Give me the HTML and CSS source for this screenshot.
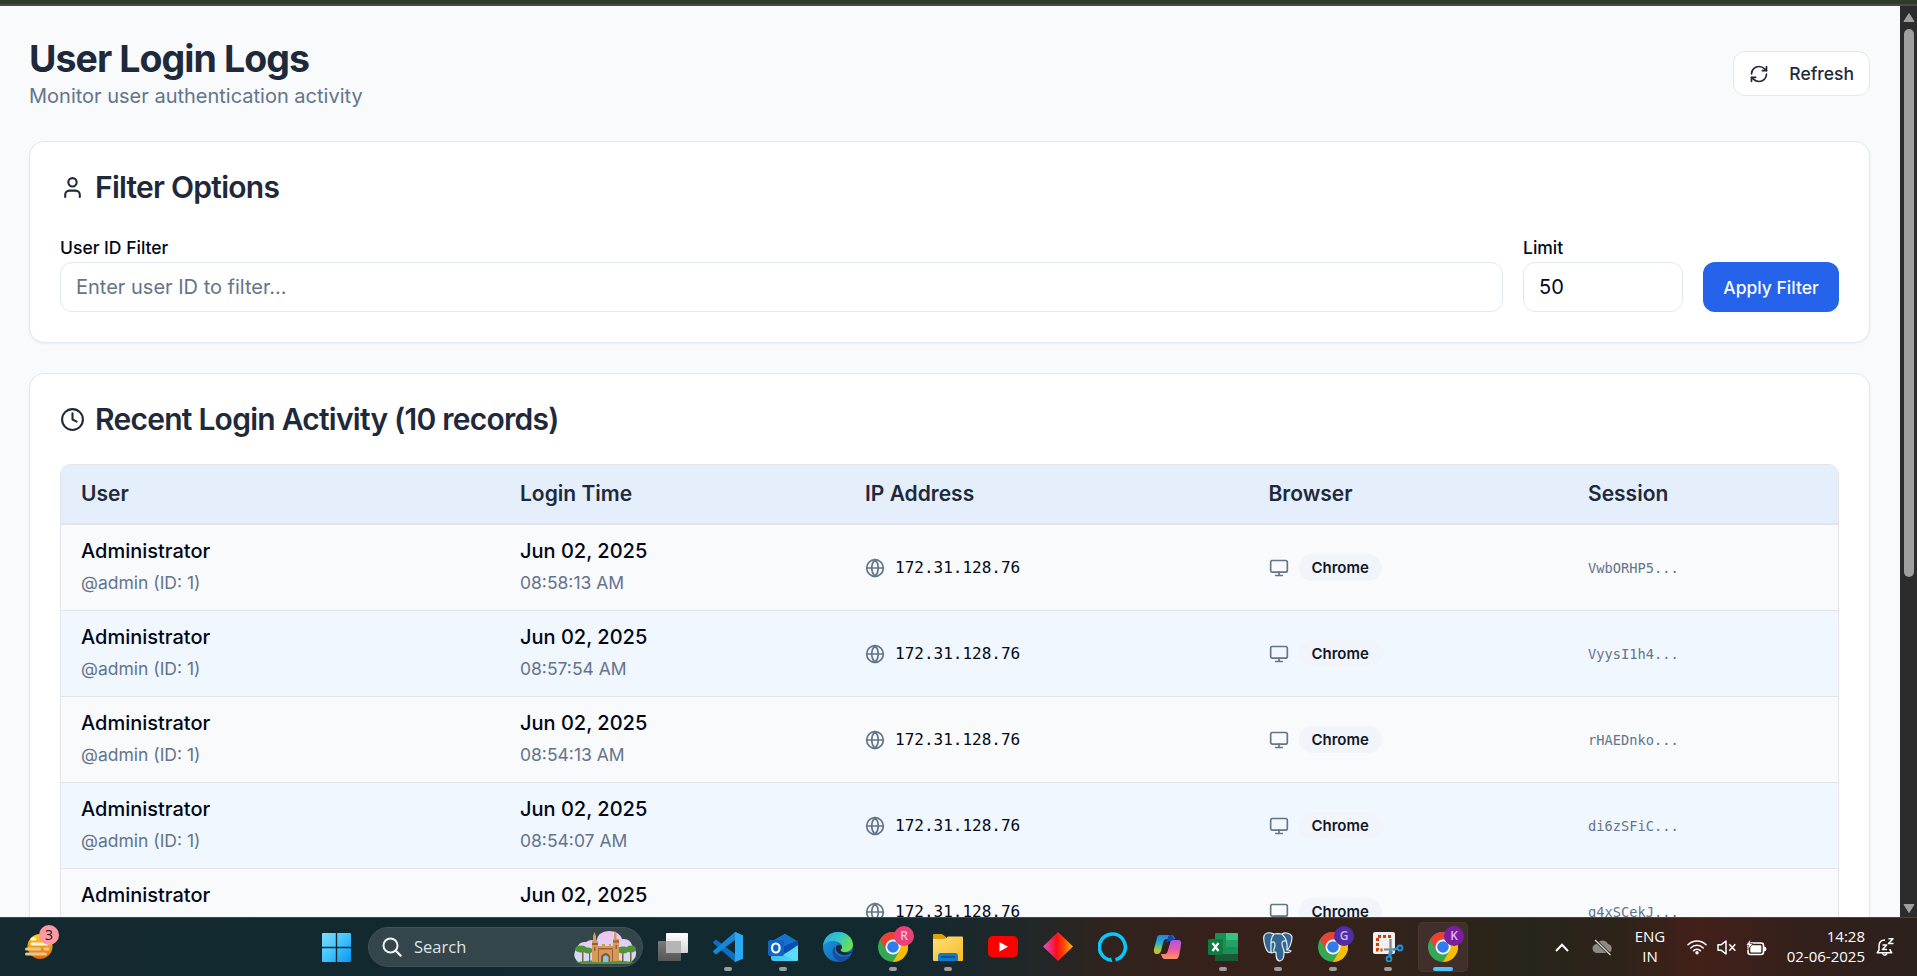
FILE: index.html
```html
<!DOCTYPE html>
<html lang="en">
<head>
<meta charset="utf-8">
<title>User Login Logs</title>
<link rel="stylesheet" href="styles.css">
</head>
<body>
<svg class="defs" width="0" height="0">
  <defs>
    <linearGradient id="winGrad" x1="0" y1="0" x2="1" y2="1"><stop offset="0" stop-color="#7fdcff"/><stop offset=".5" stop-color="#40c4fb"/><stop offset="1" stop-color="#0a94f5"/></linearGradient>
    <linearGradient id="sunGrad" x1="0" y1="0" x2="0" y2="1"><stop offset="0" stop-color="#ffd21f"/><stop offset="1" stop-color="#e8640c"/></linearGradient>
    <linearGradient id="cloudGrad" x1="0" y1="0" x2="0" y2="1"><stop offset="0" stop-color="#f3c3ee"/><stop offset="1" stop-color="#c9e0fa"/></linearGradient>
    <linearGradient id="whiteGrad" x1="0" y1="0" x2="0" y2="1"><stop offset="0" stop-color="#fff"/><stop offset="1" stop-color="#d5d5d5"/></linearGradient>
    <linearGradient id="greyGrad" x1="0" y1="0" x2="0" y2="1"><stop offset="0" stop-color="#7b7b7b"/><stop offset="1" stop-color="#565656"/></linearGradient>
    <linearGradient id="edgeTop" x1="0" y1="0" x2="1" y2=".5"><stop offset="0" stop-color="#2c9fe0"/><stop offset=".5" stop-color="#31c5cf"/><stop offset="1" stop-color="#6be04d"/></linearGradient>
    <linearGradient id="edgeLow" x1="0" y1="0" x2="1" y2="1"><stop offset="0" stop-color="#1b9de2"/><stop offset="1" stop-color="#1259b4"/></linearGradient>
    <linearGradient id="folderGrad" x1="0" y1="0" x2="1" y2="1"><stop offset="0" stop-color="#ffe17a"/><stop offset="1" stop-color="#f8b926"/></linearGradient>
    <linearGradient id="diamondGrad" x1="0" y1="0" x2="1" y2="0"><stop offset="0" stop-color="#e052d6"/><stop offset=".45" stop-color="#fb0d1b"/><stop offset=".65" stop-color="#fb3a08"/><stop offset="1" stop-color="#f8b80d"/></linearGradient>
    <linearGradient id="copLeft" x1="0" y1="0" x2="0" y2="1"><stop offset="0" stop-color="#1c85e8"/><stop offset=".45" stop-color="#2bb5c9"/><stop offset=".75" stop-color="#9ccb3f"/><stop offset="1" stop-color="#e9b620"/></linearGradient>
    <linearGradient id="copRight" x1="0" y1="0" x2="0" y2="1"><stop offset="0" stop-color="#a75be8"/><stop offset=".5" stop-color="#e85aa6"/><stop offset="1" stop-color="#ff9560"/></linearGradient>
    <linearGradient id="mailGrad" x1="0" y1="0" x2="1" y2="1"><stop offset="0" stop-color="#2fa6ee"/><stop offset="1" stop-color="#50dcfb"/></linearGradient>
  </defs>
  <symbol id="user" viewBox="0 0 24 24"><circle cx="12" cy="7" r="4"/><path d="M19 21v-2a4 4 0 0 0-4-4H9a4 4 0 0 0-4 4v2"/></symbol>
  <symbol id="clock" viewBox="0 0 24 24"><circle cx="12" cy="12" r="10"/><path d="M12 6v6l4 2"/></symbol>
  <symbol id="globe" viewBox="0 0 24 24"><circle cx="12" cy="12" r="10"/><path d="M12 2a14.5 14.5 0 0 0 0 20 14.5 14.5 0 0 0 0-20M2 12h20"/></symbol>
  <symbol id="monitor" viewBox="0 0 24 24"><rect width="20" height="14" x="2" y="3" rx="2"/><path d="M8 21h8M12 17v4"/></symbol>
  <symbol id="refresh" viewBox="0 0 24 24"><path d="M3 12a9 9 0 0 1 9-9 9.75 9.75 0 0 1 6.74 2.74L21 8"/><path d="M21 3v5h-5M21 12a9 9 0 0 1-9 9 9.75 9.75 0 0 1-6.74-2.74L3 16"/><path d="M8 16H3v5"/></symbol>
  <symbol id="chrome" viewBox="0 0 30 30">
    <circle cx="15" cy="15" r="15" fill="#34a853"/>
    <path d="M2 7.5A15 15 0 0 1 28 7.5H15L8.5 18.7Z" fill="#ea4335"/>
    <path d="M28 7.5A15 15 0 0 1 15 30L21.5 18.7 15 7.5Z" fill="#fbbc04"/>
    <circle cx="15" cy="15" r="7.5" fill="#fff"/><circle cx="15" cy="15" r="5.8" fill="#2f7df0"/>
  </symbol>
</svg>

<div class="window-edge"></div>
<div class="viewport">
  <main class="page">
    <header class="page-header">
      <div>
        <h1 class="title">User Login Logs</h1>
        <p class="subtitle">Monitor user authentication activity</p>
      </div>
      <button class="btn-refresh"><svg class="icon"><use href="#refresh"/></svg><span>Refresh</span></button>
    </header>

    <section class="card">
      <h2 class="card-title"><svg class="icon-lg"><use href="#user"/></svg>Filter Options</h2>
      <div class="filters">
        <div class="field field-wide"><label class="label" for="uid">User ID Filter</label><input class="input" id="uid" placeholder="Enter user ID to filter..."></div>
        <div class="field field-limit"><label class="label" for="limit">Limit</label><input class="input" id="limit" value="50"></div>
        <button class="btn-apply">Apply Filter</button>
      </div>
    </section>

    <section class="card">
      <h2 class="card-title"><svg class="icon-lg"><use href="#clock"/></svg>Recent Login Activity (10 records)</h2>
      <div class="table-frame">
        <div class="row row-head"><div>User</div><div>Login Time</div><div>IP Address</div><div>Browser</div><div>Session</div></div>
        <div class="row">
          <div class="stack"><p class="main">Administrator</p><p class="sub">@admin (ID: 1)</p></div>
          <div class="stack"><p class="main">Jun 02, 2025</p><p class="sub">08:58:13 AM</p></div>
          <div class="inline"><svg class="icon muted"><use href="#globe"/></svg><span class="ip">172.31.128.76</span></div>
          <div class="inline"><svg class="icon muted"><use href="#monitor"/></svg><span class="badge">Chrome</span></div>
          <div class="session">VwbORHP5...</div>
        </div>
        <div class="row row-alt">
          <div class="stack"><p class="main">Administrator</p><p class="sub">@admin (ID: 1)</p></div>
          <div class="stack"><p class="main">Jun 02, 2025</p><p class="sub">08:57:54 AM</p></div>
          <div class="inline"><svg class="icon muted"><use href="#globe"/></svg><span class="ip">172.31.128.76</span></div>
          <div class="inline"><svg class="icon muted"><use href="#monitor"/></svg><span class="badge">Chrome</span></div>
          <div class="session">VyysI1h4...</div>
        </div>
        <div class="row">
          <div class="stack"><p class="main">Administrator</p><p class="sub">@admin (ID: 1)</p></div>
          <div class="stack"><p class="main">Jun 02, 2025</p><p class="sub">08:54:13 AM</p></div>
          <div class="inline"><svg class="icon muted"><use href="#globe"/></svg><span class="ip">172.31.128.76</span></div>
          <div class="inline"><svg class="icon muted"><use href="#monitor"/></svg><span class="badge">Chrome</span></div>
          <div class="session">rHAEDnko...</div>
        </div>
        <div class="row row-alt">
          <div class="stack"><p class="main">Administrator</p><p class="sub">@admin (ID: 1)</p></div>
          <div class="stack"><p class="main">Jun 02, 2025</p><p class="sub">08:54:07 AM</p></div>
          <div class="inline"><svg class="icon muted"><use href="#globe"/></svg><span class="ip">172.31.128.76</span></div>
          <div class="inline"><svg class="icon muted"><use href="#monitor"/></svg><span class="badge">Chrome</span></div>
          <div class="session">di6zSFiC...</div>
        </div>
        <div class="row">
          <div class="top"><p class="main">Administrator</p></div>
          <div class="top"><p class="main">Jun 02, 2025</p></div>
          <div class="inline"><svg class="icon muted"><use href="#globe"/></svg><span class="ip">172.31.128.76</span></div>
          <div class="inline"><svg class="icon muted"><use href="#monitor"/></svg><span class="badge">Chrome</span></div>
          <div class="session">q4xSCekJ...</div>
        </div>
      </div>
    </section>
  </main>
  <div class="scrollbar">
    <svg class="arrow" viewBox="0 0 12 10"><path d="M6 1 11 9H1Z"/></svg>
    <div class="track"><div class="thumb"></div></div>
    <svg class="arrow" viewBox="0 0 12 10"><path d="M6 9 11 1H1Z"/></svg>
  </div>
</div>

<footer class="taskbar">
  <div class="weather">
    <svg width="36" height="36" viewBox="0 0 36 36">
      <circle cx="16" cy="23.500" r="12.500" fill="url(#sunGrad)"/>
      <g fill="none" stroke-linecap="round" stroke-width="3"><path d="M8 16h3M8 21h15" stroke="#fff6dc"/><path d="M2.500 26h13M21 26h3M2.500 31h19" stroke="#e6c68c"/></g>
    </svg>
    <span class="count">3</span>
  </div>

  <div class="start"><svg width="29" height="29" viewBox="0 0 29 29"><path fill="url(#winGrad)" d="M1 0H13.800V13.800H0V1Q0 0 1 0ZM15.200 0H28q1 0 1 1V13.800H15.200ZM0 15.200H13.800V29H1q-1 0-1-1ZM15.200 15.200H29V28q0 1-1 1H15.200Z"/></svg></div>

  <div class="search">
    <svg class="lens" width="20" height="20" viewBox="0 0 20 20"><circle cx="8.500" cy="8.500" r="7" fill="none" stroke="#f0f2f2" stroke-width="2"/><path d="m13.600 13.600 5 5" stroke="#f0f2f2" stroke-width="2.200" stroke-linecap="round"/></svg>
    <span>Search</span>
    <svg class="castle" width="64" height="33" viewBox="0 0 64 33">
      <path d="M5 31Q-2 24 4 17q2-7 9-6 6-4 10 0Q25 0 36 0q10 0 13 8 8-1 10 6 7 8 2 14l-4 4H9Z" fill="url(#cloudGrad)"/>
      <path d="M3 31q28-4 58 0l-5 2H9Z" fill="#4f9838"/>
      <g fill="#8b5a32"><path d="M9 19h1.500v12H9zM16 20h1.200v11H16zM49 20h1.500v11H49zM57 19h1.500v12H57z"/></g>
      <g fill="#4e9439"><ellipse cx="8" cy="18" rx="6" ry="3.500"/><ellipse cx="15" cy="19.500" rx="5" ry="3"/><ellipse cx="50" cy="19" rx="6" ry="3.500"/><ellipse cx="58" cy="18" rx="5" ry="3.500"/></g>
      <path d="M19 31V10h1V5l1.500-4L23 5v5h2v5h4v-2h3v2h4v-2h2v2h2V8h1V3l1-3 1.500 3v5H46V30Z" fill="#d59a5a"/>
      <path d="M19 12h6v2h-6zM40 9.500h6v2h-6zM25 17h15v1.500H25zM39 19h1v11h-1zM25 19h1v11h-1zM21 16h1.500v4H21zM42.500 14H44v4h-1.500z" fill="#9a6234"/>
      <path d="M28 31v-6q5-6 9 0v6Z" fill="#8b552d"/><path d="M30 31v-5q2.500-3.500 5.500 0v5Z" fill="#81c7ee"/>
    </svg>
  </div>

  <div class="apps">
    <div class="app"><svg viewBox="0 0 30 30"><rect y="9" width="23" height="20" rx="1" fill="url(#greyGrad)"/><rect x="8" y="1" width="22" height="20" rx="1" fill="url(#whiteGrad)"/><path d="M8 9h15v12H8z" fill="#b5b5b5"/></svg></div>
    <div class="app running"><svg viewBox="0 0 30 30"><path d="M22 0 30 3.500v23L22 30Z" fill="#2bacf7"/><path d="m0 10 3-2.500L22 22v8L0 11Z" fill="#0d6fc0"/><path d="m0 20 3 2.500L22 8V0L0 19Z" fill="#1589d8"/><path d="m22 0 8 3.500v23L22 30Z" fill="#2ba8f3"/></svg></div>
    <div class="app running"><svg viewBox="0 0 30 30"><path d="M3 10 17 2 30 10v18q0 1-2 1H6q-3 0-3-3Z" fill="url(#mailGrad)"/><path d="M3 10 17 2 29 9 16 17Z" fill="#1573cd"/><path d="M10 17 30 8v6L16 22Z" fill="#0b4db0"/><path d="M16 23 30 13v15l-2 1Z" fill="#5adcfa"/><rect y="8" width="16" height="16" rx="2" fill="#0f64c4"/><ellipse cx="7.800" cy="16" rx="3.800" ry="4.500" fill="none" stroke="#fff" stroke-width="2.200"/></svg></div>
    <div class="app"><svg viewBox="0 0 30 30"><circle cx="15" cy="15" r="15" fill="url(#edgeLow)"/><path d="M0 14C1 5 7 0 15 0c9 0 15 6 15 13 0 6-9 9-12 6-1-1 1-2 1-4 0-4-5-6-9-6C5 9 2 11 0 14Z" fill="url(#edgeTop)"/><path d="M12 14c-5 5-2 13 5 16 5 0 9-3 11-7-4 3-16 3-16-5Z" fill="#164fa1"/><path d="M18 19c-2-1 1-2 1-4 0-3-5-3-6 0-1 4 3 8 8 8 4 0 7-2 9-4-4 2-9 2-12 0Z" fill="#162a30"/></svg></div>
    <div class="app running"><svg><use href="#chrome"/></svg><span class="profile profile-r">R</span></div>
    <div class="app running"><svg viewBox="0 0 30 30"><path d="M0 3q0-1 1-1h8l4 3v4H0Z" fill="#e0a009"/><path d="M0 7h12l3-2.500h14q1 0 1 1V28q0 1-1 1H1q-1 0-1-1Z" fill="url(#folderGrad)"/><path d="M5 29v-5q0-3 3-3h14q3 0 3 3v5Z" fill="#1377cb"/><path d="M8 25h14" stroke="#0b4c8d" stroke-width="1.500"/></svg></div>
    <div class="app"><svg viewBox="0 0 30 30"><rect y="4" width="30" height="21.500" rx="5" fill="#f00"/><path d="m11.500 10 8.500 4.700-8.500 4.700Z" fill="#fff"/></svg></div>
    <div class="app"><svg viewBox="0 0 30 30"><path d="M15 0 30 14.500 15 29 0 14.500Z" fill="url(#diamondGrad)"/></svg></div>
    <div class="app"><svg viewBox="0 0 30 30"><path d="M13 28A13 13 0 1 1 17.500 27.700" fill="none" stroke="#05c8fb" stroke-width="3.600"/><path d="M12.500 24.500V30l2 0Z" fill="#05c8fb"/></svg></div>
    <div class="app"><svg viewBox="0 0 30 30"><path d="M6 3h12q3 0 4 4H13q-2 0-3 4L8 19q-1 3-4 3-4 0-3-5L4 6q0-2 2-3Z" fill="url(#copLeft)"/><path d="M17 3q3 0 4 4l1 2h-6l-3 2 2-6q0-2 2-2Z" fill="#1746b5"/><path d="M24 27H12q-3 0-4-5h4q2 0 3-4l2-8q1-2 4-2h4q4 0 3 5l-2 11q-1 2-2 3Z" fill="url(#copRight)"/><path d="m14.500 11 3-1-4 11-2.500 1Z" fill="#35201b"/></svg></div>
    <div class="app running"><svg viewBox="0 0 30 30"><path d="M8 1h21q1 0 1 1v26q0 1-1 1H9q-2 0-2-2V2q0-1 1-1Z" fill="#1a8f57"/><path d="M18 1h11l1 1v6H18Z" fill="#33c481"/><path d="M18 8h12v7H18Z" fill="#22a366"/><path d="M7 22h23v6l-1 1H8l-1-1Z" fill="#185c37"/><rect y="7" width="15" height="16" rx="1.500" fill="#107c41"/><path d="m4.500 11 6 8M10.500 11l-6 8" stroke="#fff" stroke-width="2.200"/></svg></div>
    <div class="app running"><svg viewBox="0 0 30 30"><g fill="#336791" stroke="#e6edf2" stroke-width="1.200" stroke-linejoin="round"><path d="M8 20C3 23 0 8 1 4c2-5 8-3 10-2 4-1 6 0 8 0 3-2 9-1 10 3 0 6-3 12-5 13 2 0 3 0 4 1-1 2-5 2-7 1 0 4 0 8-4 9-4 0-4-5-4-9l-5 1Z"/><path fill="none" d="M11 2C7 6 8 12 8 20M8 11q4-3 4 2c0 3-2 4-1 7M19 2c4 4 6 8 5 16M23 9q-4-1-4 3c0 3 2 4 2 8"/></g></svg></div>
    <div class="app running"><svg><use href="#chrome"/></svg><span class="profile profile-g">G</span></div>
    <div class="app running"><svg viewBox="0 0 30 30"><rect width="22" height="22" rx="2" fill="#eef0f2"/><path d="M18 4.500H4.500V18h5" fill="none" stroke="#d83b01" stroke-width="3" stroke-dasharray="3 2"/><path d="M17.500 7v11l-1.500 5M11 17.500h8l5-1" fill="none" stroke="#7d8388" stroke-width="2.200"/><circle cx="16" cy="27" r="2.500" fill="none" stroke="#2196e3" stroke-width="1.800"/><circle cx="27" cy="16" r="2.500" fill="none" stroke="#2196e3" stroke-width="1.800"/><path d="m17 24 2-5M24 16.500l-4 1.500" stroke="#2196e3" stroke-width="2.200"/></svg></div>
    <div class="app running active"><svg><use href="#chrome"/></svg><span class="profile profile-k">K</span></div>
  </div>

  <div class="tray">
    <svg class="chev" width="14" height="9" viewBox="0 0 14 9"><path d="m1 8 6-6.300L13 8" fill="none" stroke="#fff" stroke-width="2"/></svg>
    <svg class="cloud" width="21" height="17" viewBox="0 0 21 17"><path d="M5 14a4.500 4.500 0 0 1 0-9 6 6 0 0 1 11 0 4.600 4.600 0 0 1 0 9Z" fill="#8d8a86"/><path d="m3 1 15 14.500" stroke="#2b251a" stroke-width="3"/><path d="m3 1 15.500 15" stroke="#d9d8d6" stroke-width="1.300"/></svg>
    <div class="lang"><span>ENG</span><span>IN</span></div>
    <svg class="wifi" width="20" height="16" viewBox="0 0 20 16"><g fill="none" stroke="#fff" stroke-width="1.500" stroke-linecap="round"><path d="M1 5.800a12.500 12.500 0 0 1 18 0M3.800 8.900a8.600 8.600 0 0 1 12.400 0M6.600 11.600a4.800 4.800 0 0 1 6.800 0"/></g><circle cx="10" cy="13.800" r="1.700" fill="#fff"/></svg>
    <svg class="speaker" width="20" height="15" viewBox="0 0 20 15"><g fill="none" stroke="#fff" stroke-width="1.500" stroke-linejoin="round"><path d="M1 4.800h3L9 1v13l-5-3.800H1Z"/><path d="m12.300 4.300 6 6.400M18.300 4.300l-6 6.400"/></g></svg>
    <svg class="battery" width="21" height="17" viewBox="0 0 21 17"><rect x="2" y="4" width="15.500" height="11.500" rx="2.500" fill="none" stroke="#fff" stroke-width="1.600"/><rect x="4.300" y="6.200" width="11" height="7.200" rx=".8" fill="#fff"/><path d="M18 7.500q2.500.3 2.500 2.500T18 12.500Z" fill="#fff"/><path d="M4.500 0 0 6.300h2.500L1.500 11 7 4.600H4Z" fill="#fff" stroke="#3e2019" stroke-width=".6"/></svg>
    <div class="datetime"><span>14:28</span><span>02-06-2025</span></div>
    <svg class="bell" width="19" height="20" viewBox="0 0 19 20"><g fill="none" stroke="#fff" stroke-width="1.500" stroke-linejoin="round"><path d="M9 3Q3 3 3 9v4l-1.800 2.800h14.600L14 13v-1M6.500 16.500q2 3.500 4.500 0"/><path d="M6.500 8h4.200l-4.200 4.500H11M12.500 1.700H17L12.500 6.500h5"/></g></svg>
  </div>
</footer>
</body>
</html>
```

FILE: styles.css
```css
* { box-sizing: border-box; }
html, body { height: 100%; }
body {
  margin: 0;
  height: 976px;
  display: flex;
  flex-direction: column;
  overflow: hidden;
  font-family: Inter, "Liberation Sans", sans-serif;
  font-size: 20px;
  line-height: 30px;
  color: #020817;
  background: #f8fafc;
}
h1, h2, p { margin: 0; }
svg { display: block; flex: none; }
.defs { position: absolute; }

.window-edge { flex: none; height: 6px; background: #2f3c2c; border-bottom: 2px solid #494a48; }
.viewport { flex: 1; min-height: 0; display: flex; overflow: hidden; }
.page { flex: 1; padding: 30px 30px 0 29px; display: flex; flex-direction: column; gap: 30px; overflow: hidden; }

.page-header { display: flex; justify-content: space-between; align-items: center; flex: none; }
.title { font-size: 37.5px; line-height: 45px; font-weight: 700; letter-spacing: -0.025em; color: #1e293b; }
.subtitle { color: #64748b; }

.icon { width: 20px; height: 20px; fill: none; stroke: currentColor; stroke-width: 2; stroke-linecap: round; stroke-linejoin: round; }
.icon-lg { width: 25px; height: 25px; fill: none; stroke: currentColor; stroke-width: 2; stroke-linecap: round; stroke-linejoin: round; }
.muted { color: #64748b; }

.btn-refresh {
  display: flex; align-items: center; gap: 20px;
  height: 45px; padding: 0 15px;
  border: 1px solid #e2e8f0; border-radius: 12px; background: #fff;
  font: 500 17.5px/25px Inter, sans-serif; color: #1e293b;
}

.card {
  flex: none; padding: 30px;
  background: #fff; border: 1px solid #e2e8f0; border-radius: 15px;
  box-shadow: 0 1px 3px rgba(0, 0, 0, .05);
}
.card-title {
  display: flex; align-items: center; gap: 10px; margin-bottom: 30px;
  font-size: 30px; line-height: 30px; font-weight: 600; letter-spacing: -0.025em; color: #1e293b;
}

.filters { display: flex; align-items: flex-end; gap: 20px; }
.field { display: flex; flex-direction: column; }
.field-wide { flex: 1; }
.field-limit { width: 160px; }
.label { height: 30px; padding-top: 1px; font-size: 17.5px; line-height: 30px; font-weight: 500; }
.input {
  width: 100%; height: 50px; padding: 0 15px;
  border: 1px solid #e2e8f0; border-radius: 12px; background: #fff;
  font: 400 20px/30px Inter, sans-serif; color: #020817;
}
.input::placeholder { color: #64748b; opacity: 1; }
.btn-apply {
  width: 136px; height: 50px; padding: 0; border: 0; border-radius: 12px;
  background: #2563eb; color: #f8fafc; font: 500 17.5px/25px Inter, sans-serif; white-space: nowrap;
}

.table-frame { border: 1px solid #e2e4ea; border-radius: 10px; overflow: hidden; }
.row {
  display: grid; grid-template-columns: 439px 345px 403.500px 319.500px 1fr;
  height: 86px; align-items: center;
  background: #f9fafc; border-bottom: 1px solid #e2e4ea;
}
.row > div { padding-left: 20px; }
.row-alt { background: #f0f7ff; }
.row-head { height: 60px; background: #e5effc; border-bottom-width: 2px; font-size: 21px; font-weight: 600; color: #1e293b; }
.main { line-height: 27px; font-weight: 500; margin-bottom: 5px; }
.sub { font-size: 17.5px; line-height: 25px; color: #64748b; }
.stack { padding-bottom: 2px; }
.top { align-self: start; padding-top: 13px; }
.inline { display: flex; align-items: center; gap: 10px; }
.ip { font: 16px/25px "DejaVu Sans Mono", monospace; }
.badge { padding: 0 13px; border-radius: 14px; background: #f1f4f9; font-size: 15px; line-height: 27px; font-weight: 600; color: #0f172a; }
.session { font: 13.7px/20px "DejaVu Sans Mono", monospace; color: #64748b; }

.scrollbar { width: 17px; flex: none; background: #2c2c2c; display: flex; flex-direction: column; align-items: center; padding: 6px 0 3px 1px; }
.arrow { width: 12px; height: 11px; fill: #9f9f9f; stroke: #9f9f9f; stroke-linejoin: round; }
.track { flex: 1; padding-top: 6px; }
.thumb { width: 10px; height: 548px; border-radius: 5px; background: #9f9f9f; }

.taskbar {
  flex: none; height: 59px; display: flex; align-items: center;
  border-top: 1px solid #3a4a4c;
  background: linear-gradient(90deg, #13282f 0, #12292f 900px, #232728 1040px, #30231d 1110px, #37211a 1220px, #32231b 1400px, #272519 1530px, #2d2319 1620px, #43201a 1700px, #33201b 1800px, #2c201e 100%);
  font-family: "Open Sans", "Noto Sans", sans-serif; color: #fff;
}
.weather { position: relative; width: 36px; margin-left: 24px; height: 36px; }
.weather svg { margin-top: -6px; }
.count { position: absolute; left: 15px; top: -4px; width: 20px; height: 20px; border-radius: 50%; background: #fd99a2; color: #1c1416; font-size: 14px; line-height: 20px; text-align: center; }
.start { margin-left: 262px; }
.search {
  display: flex; align-items: center; width: 275px; height: 40px; margin-left: 17px; padding: 0 5px 0 13px;
  border: 1px solid #435256; border-radius: 20px; background: #34464b;
  font-size: 16.500px; color: #dfe4e5;
}
.search span { margin-left: 12px; }
.castle { margin-left: auto; }
.apps { display: flex; gap: 5px; margin-left: 5px; }
.app { position: relative; width: 50px; height: 50px; padding: 10px; border-radius: 5px; }
.app > svg { width: 30px; height: 30px; }
.running::after { content: ""; position: absolute; left: 21px; bottom: 1px; width: 8px; height: 4px; border-radius: 2px; background: #9d9d9c; }
.active { background: #402f2a; box-shadow: inset 0 0 0 1px #49372f; }
.active::after { left: 15px; width: 20px; background: #4cc2ff; }
.profile { position: absolute; left: 26px; top: 4px; width: 20px; height: 20px; border-radius: 50%; text-align: center; font: 600 12px/20px "Open Sans", sans-serif; }
.profile-r { background: #ec407a; color: #f9c5d6; }
.profile-g { background: #512da8; color: #c7b9e6; }
.profile-k { background: #7b1fa2; color: #dfb9ea; }

.tray { display: flex; align-items: center; margin-left: 87px; font-size: 15px; line-height: 20px; }
.cloud { margin-left: 23px; }
.lang { display: flex; flex-direction: column; align-items: center; width: 40px; margin-left: 17px; padding-bottom: 2px; }
.wifi { margin-left: 17px; }
.speaker { margin-left: 10px; }
.battery { margin-left: 9px; }
.datetime { display: flex; flex-direction: column; align-items: flex-end; width: 98px; padding-bottom: 2px; }
.bell { margin-left: 11px; }
```
